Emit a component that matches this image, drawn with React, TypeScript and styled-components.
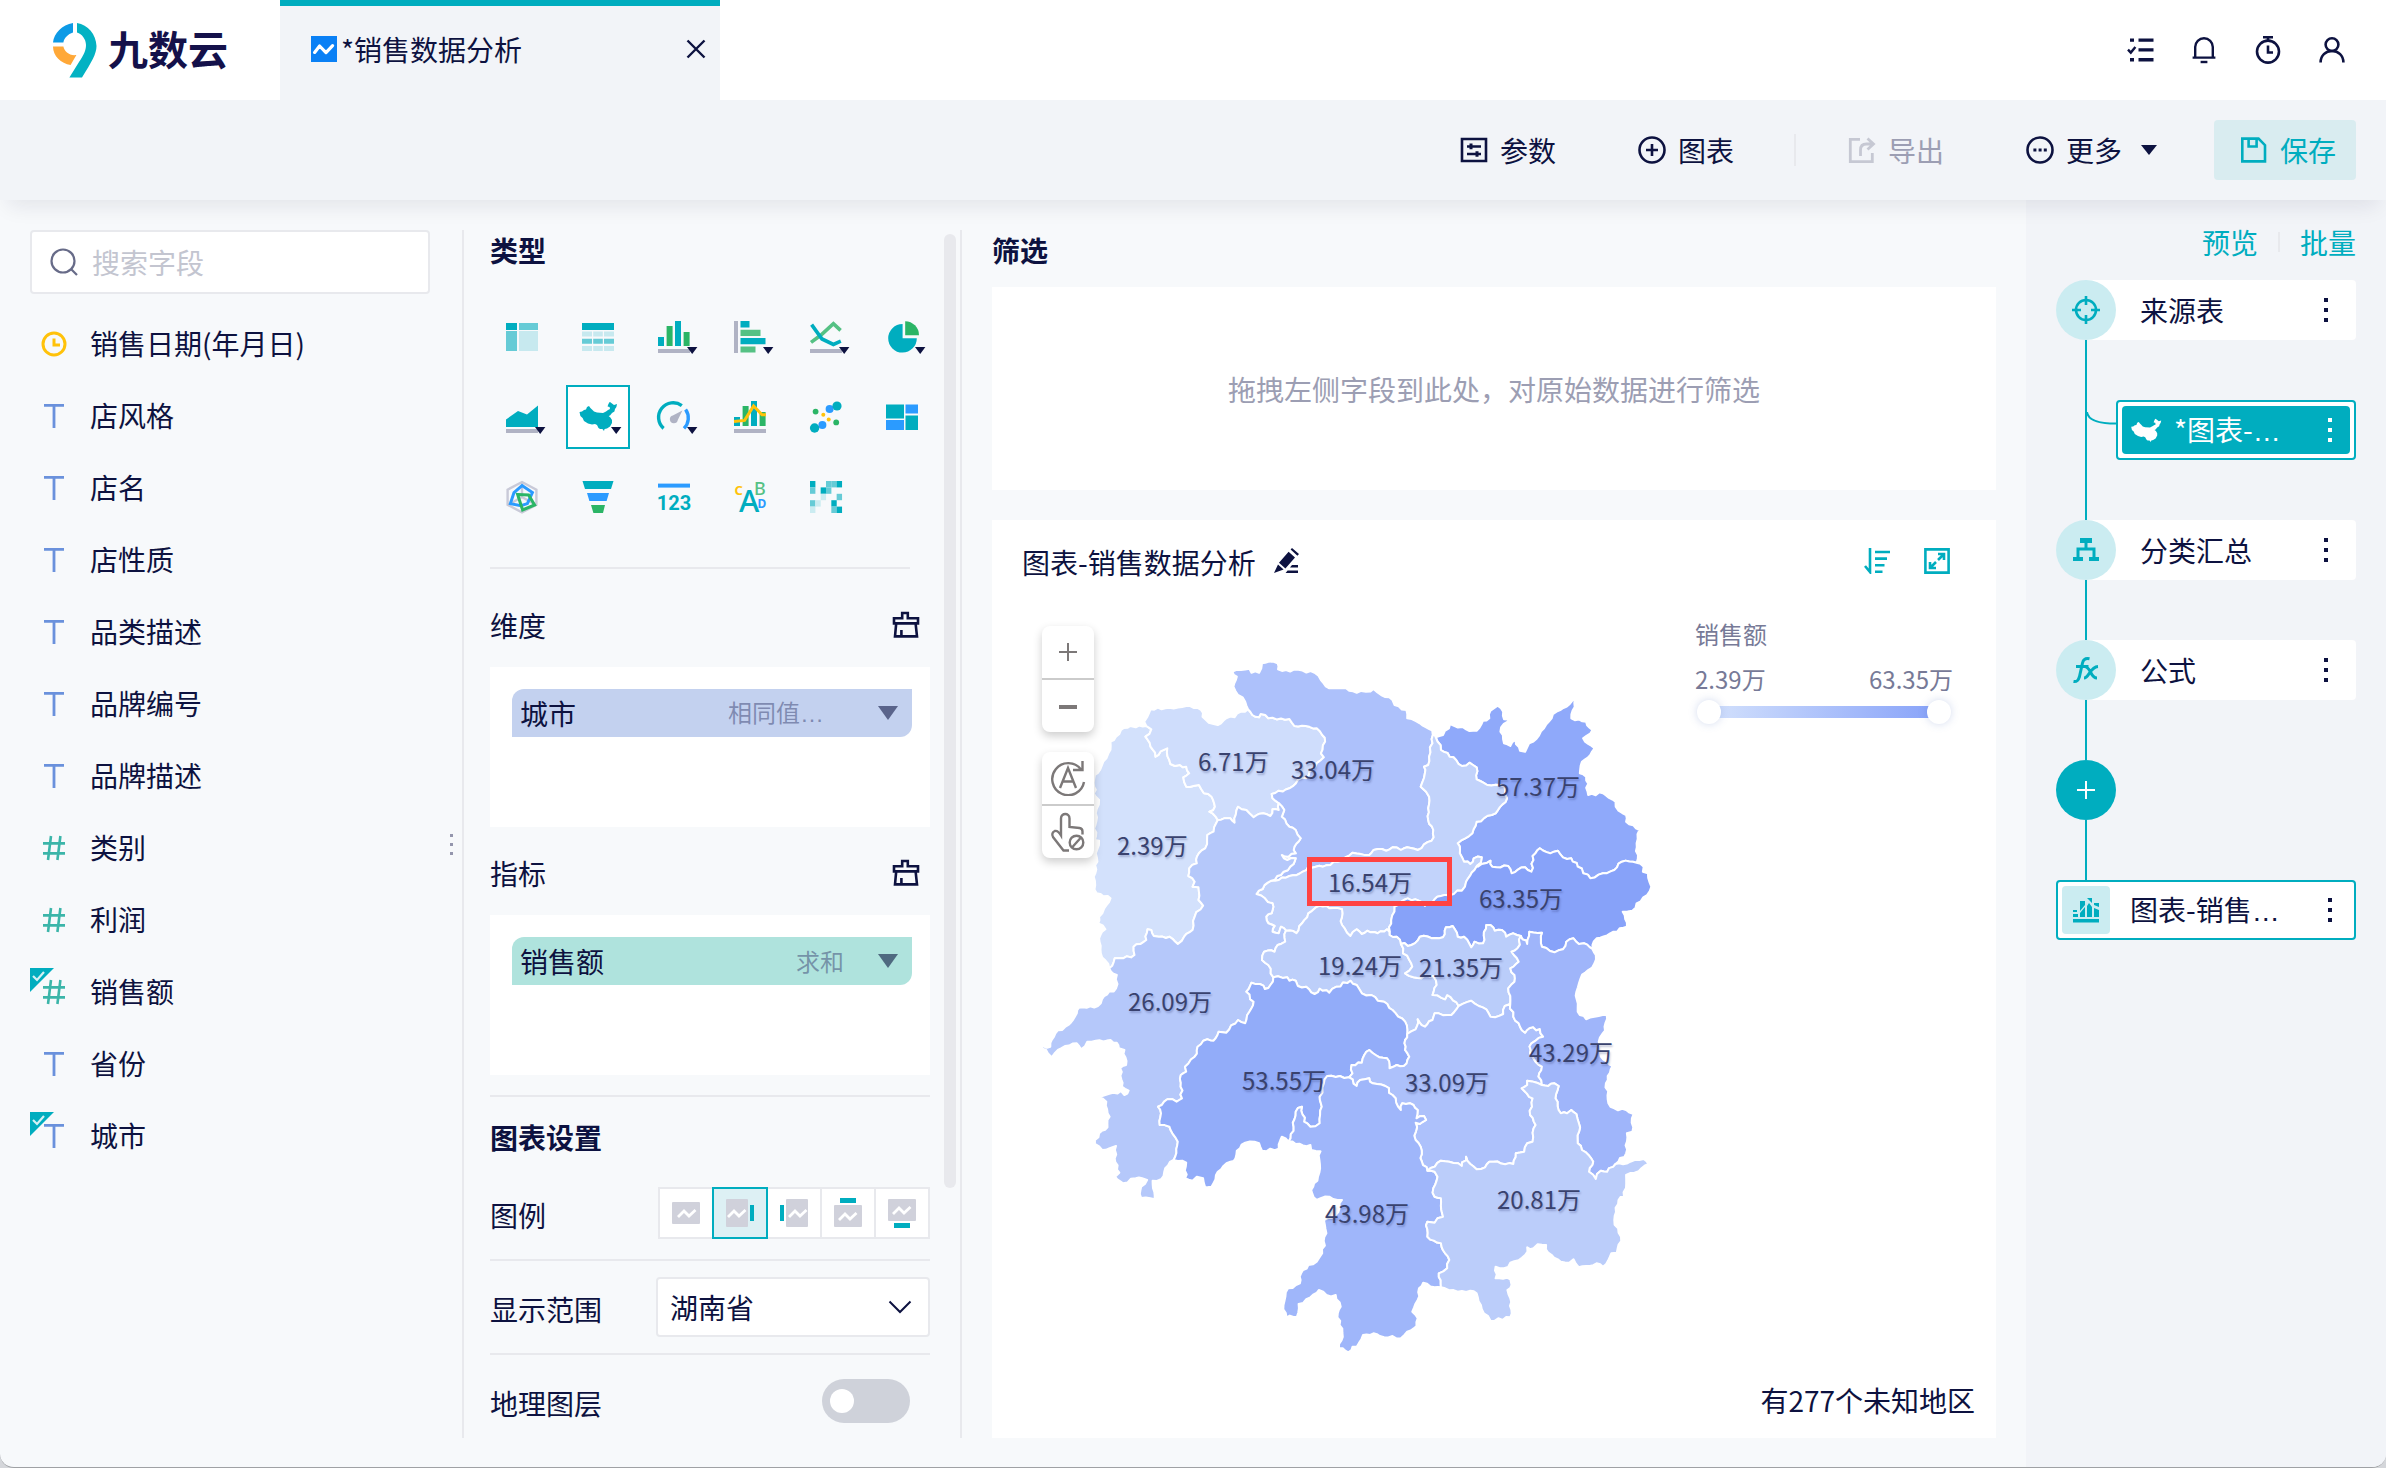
import React from 'react';
import styled, { createGlobalStyle, css } from 'styled-components';

const c = {
  ink: '#0d1240',
  teal: '#00adbf',
  tealMid: '#66cbd6',
  tealLight: '#cbecf1',
  green: '#2bb566',
  blue: '#2b9bff',
  yellow: '#ffc20a',
  line: '#e8e9ed',
  page: '#f7f9fb',
  side: '#f2f4f8',
  axis: '#b0b3c4',
  mute: '#9c9eb3',
};

const Global = createGlobalStyle`
  * { box-sizing: border-box; }
  html { background: #d4d6da; }
  body { margin: 0; }
  body, button, input, select {
    font-family: "Noto Sans CJK SC", "Noto Sans", sans-serif;
    font-size: 28px;
    line-height: 40px;
    color: ${c.ink};
  }
  button { border: 0; padding: 0; background: none; cursor: pointer; }
  svg { display: block; flex: none; }
  h1, h2, h3, ul, p { margin: 0; padding: 0; font-size: inherit; font-weight: inherit; }
`;

const Page = styled.div`
  min-height: 100vh;
  display: flex;
  flex-direction: column;
  background: ${c.page};
  border-bottom: 1px solid #9fa1a4;
  border-radius: 0 0 14px 14px;
  overflow: hidden;
`;

/* ---------- header ---------- */
const Header = styled.header`
  display: flex;
  height: 100px;
  background: #fff;
`;
const Brand = styled.a`
  width: 280px;
  display: flex;
  align-items: center;
  gap: 10px;
  padding-left: 52px;
  color: #14114a;
  text-decoration: none;
  font-size: 40px;
  font-weight: 700;
  span { padding-bottom: 4px; }
`;
const Tab = styled.div`
  width: 440px;
  display: flex;
  align-items: center;
  gap: 4px;
  padding: 0 14px 8px 31px;
  background: ${c.side};
  border-top: 6px solid ${c.teal};
`;
const TabTitle = styled.h1`
  flex: 1;
`;
const HeaderTools = styled.nav`
  margin-left: auto;
  display: flex;
  align-items: center;
  gap: 36px;
  padding-right: 40px;
`;
const IconButton = styled.button`
  display: flex;
  align-items: center;
  justify-content: center;
`;

/* ---------- toolbar ---------- */
const Toolbar = styled.div`
  position: relative;
  z-index: 1;
  height: 100px;
  display: flex;
  align-items: center;
  justify-content: flex-end;
  padding-right: 30px;
  background: ${c.side};
  box-shadow: 0 14px 20px -8px rgba(20, 24, 50, 0.09);
`;
const ToolButton = styled.button<{ $muted?: boolean }>`
  display: flex;
  align-items: center;
  gap: 12px;
  margin-right: 82px;
  color: ${(p) => (p.$muted ? c.mute : c.ink)};
`;
const ToolGroup = styled.div<{ $end: number }>`
  display: flex;
  align-items: center;
  & > :last-child { margin-right: ${(p) => p.$end}px; }
`;
const ToolRule = styled.span`
  width: 2px;
  height: 32px;
  margin-right: 52px;
  background: ${c.line};
`;
const SaveButton = styled.button`
  display: flex;
  align-items: center;
  gap: 12px;
  height: 60px;
  padding: 0 20px 0 26px;
  border-radius: 4px;
  background: #d9ecf0;
  color: ${c.teal};
`;

/* ---------- body ---------- */
const Body = styled.main`
  flex: 1;
  display: flex;
`;
const FieldPanel = styled.aside`
  position: relative;
  width: 464px;
  margin: 30px 0 29px;
  padding: 0 32px 0 30px;
  border-right: 2px solid ${c.line};
`;
const Search = styled.label`
  display: flex;
  align-items: center;
  gap: 12px;
  height: 64px;
  padding: 0 16px;
  background: #fff;
  border: 2px solid ${c.line};
  border-radius: 4px;
  input {
    flex: 1;
    min-width: 0;
    border: 0;
    padding: 0;
    outline: 0;
    background: none;
  }
  input::placeholder { color: #c3c5d0; opacity: 1; }
`;
const FieldList = styled.ul`
  list-style: none;
  margin-top: 26px;
  display: grid;
  gap: 24px;
`;
const FieldRow = styled.li`
  position: relative;
  display: flex;
  align-items: center;
  gap: 22px;
  height: 48px;
  padding-left: 10px;
`;
const FieldName = styled.span`
  padding-bottom: 2px;
`;
const UsedBadge = styled.svg`
  position: absolute;
  left: 0;
  top: 0;
`;
const DragHandle = styled.span`
  position: absolute;
  right: 8px;
  top: 50%;
`;

const SetupPanel = styled.section`
  width: 498px;
  margin: 30px 0 29px;
  padding: 0 4px 0 26px;
  display: flex;
  gap: 14px;
  border-right: 2px solid ${c.line};
`;
const SetupContent = styled.div`
  flex: 1;
  min-width: 0;
`;
const ScrollThumb = styled.div`
  flex: none;
  width: 12px;
  height: 954px;
  margin-top: 4px;
  border-radius: 6px;
  background: ${c.line};
`;
const Title = styled.h2`
  font-weight: 700;
`;
const TypeGrid = styled.div`
  display: grid;
  grid-template-columns: repeat(6, 64px);
  gap: 16px 12px;
  margin: 35px 0 38px;
`;
const TypeButton = styled.button<{ $on?: boolean }>`
  width: 64px;
  height: 64px;
  ${(p) => p.$on && css`
    background: #fff;
    box-shadow: inset 0 0 0 2px ${c.teal};
  `}
`;
const Rule = styled.hr<{ $inset?: boolean; $above?: number }>`
  height: 2px;
  margin: ${(p) => p.$above ?? 0}px ${(p) => (p.$inset ? 20 : 0)}px 0 0;
  border: 0;
  background: ${c.line};
`;
const GroupHead = styled.div<{ $first?: boolean }>`
  display: flex;
  align-items: center;
  justify-content: space-between;
  padding: ${(p) => (p.$first ? 36 : 26)}px 10px 22px 0;
`;
const DropBox = styled.div`
  height: 160px;
  padding: 22px 18px 22px 22px;
  background: #fff;
`;
const Chip = styled.div<{ $tone: string }>`
  display: flex;
  align-items: center;
  height: 48px;
  padding: 0 14px 0 8px;
  background: ${(p) => p.$tone};
  border-radius: 12px 0 12px 0;
`;
const ChipAux = styled.span`
  margin-left: auto;
  font-size: 24px;
  color: rgba(60, 68, 115, 0.5);
`;
const ChipArrow = styled(IconButton)<{ $gap: number }>`
  margin-left: ${(p) => p.$gap}px;
`;
const SectionHead = styled.div`
  padding: 20px 0 30px;
`;
const SettingRow = styled.div<{ $top: number; $bottom: number }>`
  display: flex;
  align-items: center;
  justify-content: space-between;
  padding: ${(p) => p.$top}px 0 ${(p) => p.$bottom}px;
  & > span, & > label { padding-top: 4px; }
`;
const LegendPicker = styled.div`
  display: flex;
  padding-left: 2px;
`;
const LegendButton = styled.button<{ $on?: boolean }>`
  position: relative;
  width: 56px;
  height: 52px;
  margin-left: -2px;
  background: ${(p) => (p.$on ? '#ddf0f4' : '#fff')};
  border: 2px solid ${(p) => (p.$on ? c.teal : c.line)};
  z-index: ${(p) => (p.$on ? 1 : 0)};
  svg { margin: -2px; }
`;
const SelectWrap = styled.div`
  position: relative;
  width: 274px;
  select {
    appearance: none;
    width: 100%;
    height: 60px;
    padding: 0 48px 0 12px;
    background: #fff;
    border: 2px solid ${c.line};
    border-radius: 4px;
  }
  svg {
    position: absolute;
    right: 18px;
    top: 23px;
    pointer-events: none;
  }
`;
const Switch = styled.input`
  appearance: none;
  width: 88px;
  height: 44px;
  margin: 0 20px 0 0;
  padding: 10px 8px;
  border-radius: 22px;
  background: #cfd2da;
  &::before {
    content: '';
    display: block;
    width: 24px;
    height: 24px;
    border-radius: 50%;
    background: #fff;
  }
`;

const Stage = styled.section`
  flex: 1;
  min-width: 0;
  display: flex;
  flex-direction: column;
  padding: 30px 30px 29px;
`;
const FilterDrop = styled.div`
  height: 203px;
  margin: 17px 0 30px;
  display: flex;
  align-items: center;
  justify-content: center;
  background: #fff;
  color: ${c.mute};
`;
const ChartCard = styled.article`
  flex: 1;
  display: flex;
  flex-direction: column;
  background: #fff;
`;
const ChartHead = styled.div`
  display: flex;
  align-items: center;
  gap: 16px;
  padding: 20px 46px 20px 30px;
  h3 { padding-top: 2px; }
`;
const ChartTools = styled.div`
  margin-left: auto;
  display: flex;
  gap: 34px;
`;
const Canvas = styled.div`
  flex: 1;
  position: relative;
  padding: 24px 50px;
`;
const MapArt = styled.svg`
  position: absolute;
  left: 28px;
  top: 38px;
  overflow: visible;
  text {
    font-size: 24px;
    fill: #39426e;
    text-shadow: 1px 2px 2px rgba(50, 60, 120, 0.3);
  }
`;
const MapTools = styled.div`
  position: relative;
  width: 52px;
  margin-bottom: 20px;
  border-radius: 8px;
  background: #fff;
  box-shadow: 0 4px 10px rgba(0, 0, 0, 0.2);
  button { width: 52px; height: 52px; }
  button + button { height: 54px; border-top: 2px solid #cbcbcb; }
`;
const ScaleLegend = styled.div`
  position: absolute;
  right: 43px;
  top: 12px;
  width: 258px;
  font-size: 24px;
  color: #777a97;
`;
const ScaleEnds = styled.div`
  display: flex;
  justify-content: space-between;
  margin-top: 5px;
`;
const ScaleTrack = styled.div`
  position: relative;
  height: 12px;
  margin: 7px 14px;
  background: linear-gradient(90deg, #d3e1fc, #87a2f9);
  input {
    appearance: none;
    position: absolute;
    left: -12px;
    top: -6px;
    width: calc(100% + 24px);
    height: 24px;
    margin: 0;
    background: none;
    pointer-events: none;
  }
  input::-webkit-slider-thumb {
    appearance: none;
    pointer-events: auto;
    width: 24px;
    height: 24px;
    border-radius: 50%;
    background: #fff;
    box-shadow: 0 0 8px rgba(80, 110, 190, 0.25);
  }
`;
const UnknownNote = styled.p`
  position: absolute;
  right: 21px;
  bottom: 18px;
`;

const FlowPanel = styled.aside`
  width: 360px;
  padding: 22px 30px;
  background: ${c.side};
`;
const FlowLinks = styled.div`
  display: flex;
  justify-content: flex-end;
  align-items: center;
  gap: 20px;
  margin-bottom: 18px;
  button { color: ${c.teal}; }
  span { width: 2px; height: 20px; background: ${c.line}; }
`;
const Node = styled.div`
  display: flex;
  align-items: center;
  height: 60px;
  padding-right: 26px;
  background: linear-gradient(90deg, transparent 30px, #fff 30px);
  border-radius: 4px;
`;
const NodeIcon = styled.span`
  width: 60px;
  height: 60px;
  margin-right: 24px;
  display: flex;
  align-items: center;
  justify-content: center;
  border-radius: 50%;
  background: ${c.tealLight};
`;
const NodeName = styled.span`
  flex: 1;
  white-space: nowrap;
`;
const Wire = styled.div`
  width: 2px;
  height: 60px;
  margin-left: 29px;
  background: ${c.teal};
`;
const Branch = styled.div`
  display: flex;
  align-items: center;
  height: 180px;
  margin-left: 29px;
  border-left: 2px solid ${c.teal};
`;
const ChartNode = styled.div`
  flex: 1;
  display: flex;
  align-items: center;
  height: 60px;
  padding: 4px;
  background: #fff;
  border: 2px solid ${c.teal};
  border-radius: 4px;
`;
const ChartNodeFill = styled.div`
  flex: 1;
  display: flex;
  align-items: center;
  gap: 12px;
  height: 48px;
  padding: 0 16px 0 8px;
  border-radius: 4px;
  background: ${c.teal};
  color: #fff;
`;
const ChartNodeIcon = styled.span`
  width: 48px;
  height: 48px;
  margin-right: 20px;
  display: flex;
  align-items: center;
  justify-content: center;
  border-radius: 4px;
  background: ${c.tealLight};
`;
const OutputNode = styled(ChartNode)`
  padding-right: 20px;
`;
const AddButton = styled.button`
  width: 60px;
  height: 60px;
  display: flex;
  align-items: center;
  justify-content: center;
  border-radius: 50%;
  background: ${c.teal};
`;
const Dots = styled.span`
  font-family: "Liberation Sans", sans-serif;
`;

/* ---------- small icons ---------- */
const Kebab = ({ color = c.ink }: { color?: string }) => (
  <IconButton aria-label="菜单">
    <svg width="8" height="24" viewBox="0 0 8 24" fill={color}>
      <path d="M2 0h4v4H2zM2 10h4v4H2zM2 20h4v4H2z" />
    </svg>
  </IconButton>
);
const Brush = () => (
  <svg width="28" height="28" viewBox="0 0 28 28" fill="none" stroke={c.ink} strokeWidth="2.6">
    <path d="M2 7.2h8.2V2h5.600v5.200H26v5.200H2zM4.200 12.400 3 25.400h22l-1.400-13M9.400 25v-6" />
  </svg>
);
const CHINA = '13.5,27 16,26.6 18,25 20,24.6 21,22 23,21 24.4,23 26,24.5 28,26.6 31,27.6 37,28 40,26.4 42,25 44,24 43.6,22 41.6,21.6 42,20 43.2,17.6 44,17 46,18.4 48,20 51,19 50.4,22 49,24 48.4,26.4 46,28 44,30.4 42.6,31 44.4,32.4 46,35 46,38 44,41.6 41,43.6 38.6,44 38,46 36.4,44 34,44 32.5,43 31,40 29,39 26,39.6 22,38.5 18,36 16.6,33 14.4,31';
const China = ({ fill }: { fill: string }) => (
  <svg width="32" height="26" viewBox="12 15 40 32"><polygon points={CHINA} fill={fill} /></svg>
);

type Cell = { name: string; menu?: boolean; on?: boolean; art: React.ReactNode };
const Base = () => <rect x="16" y="44" width="32" height="4" fill={c.axis} />;
const Bars = () => (
  <>
    <path d="M16 32h6v9h-6zM33 16h6v25h-6z" fill={c.teal} />
    <path d="M24.6 21h6v20h-6zM41.6 27h6v14h-6z" fill={c.green} />
  </>
);
const heat: [number, number, string][] = [
  [0, 0, c.teal], [3, 0, c.tealMid], [4, 0, c.tealMid], [5, 0, c.teal],
  [0, 1, c.tealMid], [2, 1, c.teal], [3, 1, c.tealMid],
  [2, 2, c.tealLight], [5, 2, c.tealMid],
  [0, 3, c.tealMid], [1, 3, c.tealLight], [4, 3, c.teal],
  [0, 4, c.tealLight], [4, 4, c.tealMid], [5, 4, c.teal],
];
const types: Cell[] = [
  { name: '交叉表', art: <><path d="M16 18h11v7H16z" fill={c.teal} /><path d="M29 18h19v7H29zM16 26h11v20H16z" fill={c.tealMid} /><path d="M29 26h19v20H29z" fill="#c7e9ef" /></> },
  { name: '明细表', art: <><path d="M16 18h32v7H16z" fill={c.teal} /><path d="M16 26.6h10v5H16zM27.2 26.6h9.6v5h-9.6zM38 26.6h10v5H38zM16 41h10v5H16zM27.2 41h9.6v5h-9.6zM38 41h10v5H38z" fill="#c7e9ef" /><path d="M16 33.8h10v5H16zM27.2 33.8h9.6v5h-9.6zM38 33.8h10v5H38z" fill={c.tealMid} /></> },
  { name: '柱形图', menu: true, art: <><Bars /><Base /></> },
  { name: '条形图', menu: true, art: <><path d="M16 16h4v32h-4z" fill={c.axis} /><path d="M22.5 16h9v6.4h-9zM22.5 33h25v6.2h-25z" fill={c.teal} /><path d="M22.5 24.8h20V31h-20zM22.5 41.6h15v6h-15z" fill="#55c184" /></> },
  { name: '折线图', menu: true, art: <><g fill="none" strokeWidth="3.6"><path d="M17 37.4 27 30l12.4-11.4L46.6 25.4" stroke="#55c184" /><path d="M17.6 19.6 28 34l11.4 5.4 7.4-3.2" stroke={c.teal} /></g><Base /></> },
  { name: '饼图', menu: true, art: <><path d="M32.6 19v14.2h14.2A14.3 14.3 0 1 1 32.6 19z" fill={c.teal} /><path d="M35.2 16.2A14 14 0 0 1 49 30.2H35.2z" fill={c.green} /></> },
  { name: '面积图', menu: true, art: <><path d="M16 34.5 28 26l9 3.6 11-9.2V42H16z" fill={c.teal} /><Base /></> },
  { name: '地图', menu: true, on: true, art: <polygon points={CHINA} fill={c.teal} /> },
  { name: '仪表盘', menu: true, art: <><g fill="none" strokeWidth="3.4"><path d="M21.6 43.4A14.6 14.6 0 0 1 39.8 20.6" stroke={c.teal} /><path d="M43.6 24.6a14.6 14.6 0 0 1-1.6 18.8" stroke={c.blue} /></g><path d="M40.4 25.4 35.8 35a4 4 0 1 1-5-4.6z" fill={c.axis} /></> },
  { name: '组合图', art: <><Bars /><path d="M16 36.4 26.6 35.4 35.6 21 44 29.8H48" fill="none" stroke={c.yellow} strokeWidth="3" /><Base /></> },
  { name: '散点图', art: <><g fill={c.blue}><circle cx="35.6" cy="24" r="4" /><circle cx="28.4" cy="40" r="4" /></g><g fill={c.teal}><circle cx="43" cy="21" r="4.6" /><circle cx="20.6" cy="43" r="4.7" /></g><g fill={c.green}><circle cx="21.6" cy="26.6" r="2.9" /><circle cx="42.2" cy="37.4" r="2.9" /></g><g fill={c.yellow}><circle cx="29.3" cy="29.8" r="2" /><circle cx="34.7" cy="34.4" r="2" /></g></> },
  { name: '矩形树图', art: <><path d="M16 19.5h18v14H16zM35.5 30.5H48V45H35.5z" fill={c.teal} /><path d="M35.5 19.5H48v9H35.5zM16 35h18v10H16z" fill={c.blue} /></> },
  { name: '雷达图', art: <g fill="none" strokeWidth="3"><path d="m32 17 14.4 7.6v15.2L32 47.4l-14.4-7.6V24.6zM32 17v15l14 8M32 32l-14 8" stroke="#c9cad8" strokeWidth="2.4" /><path d="m32 20.6 10.4 7L37.4 38.6 31 40.6l-10.6-2 3.6-11z" stroke={c.blue} /><path d="M27.6 29.4 38.6 30l6 10-12 5z" stroke={c.green} /></g> },
  { name: '漏斗图', art: <><path d="M16.5 16h31L45 24H19z" fill={c.teal} /><path d="M21 28h22l-2.4 8H23.4z" fill={c.blue} /><path d="M25 40h14l-2 8H27.4z" fill={c.green} /></> },
  { name: '指标卡', art: <><path d="M16 18.6h32v4H16z" fill={c.blue} /><text x="32" y="44.6" textAnchor="middle" fontFamily="Roboto" fontWeight="700" fontSize="20" fill={c.teal}>123</text></> },
  { name: '词云', art: <g fontFamily="Noto Sans"><text x="21" y="47" fontSize="31" fontWeight="500" fill={c.teal}>A</text><text x="16.6" y="30" fontSize="13" fontWeight="700" fill={c.yellow}>C</text><text x="36" y="30" fontSize="18" fontWeight="500" fill="#55c184">B</text><text x="39.4" y="43" fontSize="12" fontWeight="700" fill={c.blue}>D</text></g> },
  { name: '热力图', art: <>{heat.map(([x, y, f]) => <rect key={`${x}-${y}`} x={16 + x * 5.33} y={16 + y * 6.4} width="5.4" height="6.4" fill={f} />)}</> },
];

/* ---------- map ---------- */
type Pt = [number, number];
const GRID_X = 2.376;
const GRID_Y = 3;

const hash = (n: number) => {
  const s = Math.sin(n * 12.9898) * 43758.5453;
  return s - Math.floor(s) - 0.5;
};

/* Reads one boundary line and roughens it, so both neighbours share the same coast. */
const arc = (text: string, south = 0): Pt[] => {
  const pts = text.trim().split(/\s+/).map((p) => {
    const [x, y] = p.split(',').map(Number);
    return [x / GRID_X, (y + south) / GRID_Y] as Pt;
  });
  const out: Pt[] = [pts[0]];
  for (let i = 1; i < pts.length; i++) {
    const [a, b] = [pts[i - 1], pts[i]];
    const len = Math.hypot(b[0] - a[0], b[1] - a[1]);
    const n = Math.max(1, Math.round(len / 4));
    for (let k = 1; k < n; k++) {
      const t = k / n;
      const d = hash(a[0] * 3 + a[1] * 7 + k * 5) * 3;
      out.push([
        a[0] + (b[0] - a[0]) * t - ((b[1] - a[1]) / len) * d,
        a[1] + (b[1] - a[1]) * t + ((b[0] - a[0]) / len) * d,
      ]);
    }
    out.push(b);
  }
  return out;
};

const S = 960;
const arcs: Record<string, Pt[]> = {
  aCoast: arc('300,258 275,262 262,258 240,270 228,290 215,305 210,340 198,365 190,390 178,405 176,440 180,470 188,480 180,520 178,600 188,602 180,640 184,665 175,710 182,760 215,775 200,805 188,830 186,850 203,868 188,895 192,940 212,985'),
  ab: arc('300,258 312,268 298,290 322,350 350,325 357,372 380,375 395,380 402,400 388,412 395,440 412,438 425,435 437,460 455,470 463,500 450,515 470,540'),
  bCoast: arc('300,258 295,245 302,232 310,208 345,205 395,198 430,210 440,238 460,252 470,255 490,235 510,232 525,215 542,208'),
  bc: arc('542,208 552,225 568,232 572,222 590,235 640,237 652,258 705,265 718,285 725,305 715,340 722,352 705,370 680,415 660,420 640,445 598,462 600,475 615,490'),
  bg: arc('470,540 485,535 500,535 510,548 518,500 545,520 555,532 578,520 595,528 600,508 615,510 615,490'),
  ag: arc('470,540 460,575 445,585 440,625 425,640 420,670 402,685 400,708 415,725 410,740 424,742 424,780 435,797 415,830 410,870 390,890 375,912 355,890 330,890 318,888 312,870 303,868 300,900 270,920 272,945 245,955 225,955 212,985'),
  cCoast: arc('542,208 535,185 518,165 507,140 515,110 505,95 525,90 545,86 550,98 568,98 575,70 590,65 612,70 613,88 700,98 715,120 735,145 765,145 800,158 822,155 840,147 858,165 885,180 890,195 918,210 920,235 950,250 965,262 980,272'),
  cg: arc('615,490 628,510 622,530 640,560 655,570 667,595 652,620 655,640 638,650 622,645 635,660 655,655 650,672 620,705 597,722'),
  ce: arc('597,722 640,708 672,695 685,680 720,680 755,665 790,638 830,645 840,630 870,632 885,622 905,630 920,622 945,630 978,602 982,570 970,540 972,470 965,455 952,440 962,400 960,380 970,375 972,350 980,310 980,272'),
  dCoast: arc('988,292 1005,285 1022,252 1060,268 1085,272 1100,242 1115,235 1118,212 1135,197 1148,215 1150,238 1164,232 1172,205 1166,236 1143,262 1150,310 1165,318 1178,300 1188,332 1200,335 1205,322 1245,265 1275,215 1320,177 1310,235 1345,245 1360,270 1338,295 1365,325 1355,345 1335,365 1330,400 1345,410 1350,465 1385,460 1415,485 1422,512 1440,525 1440,545 1472,570 1465,610 1465,668'),
  ed: arc('988,292 1000,330 1030,352 1050,378 1068,368 1085,382 1085,418 1110,435 1150,437 1157,475 1130,520 1085,545 1075,580 1058,595 1040,610 1045,640 1055,665 1070,672 1078,655 1097,652 1095,668'),
  df: arc('1095,668 1088,680 1118,662 1122,680 1160,678 1168,700 1200,682 1215,695 1218,648 1235,625 1260,640 1278,632 1290,652 1310,655 1325,680 1355,715 1385,700 1412,690 1430,665 1465,668'),
  ef: arc('1095,668 1080,690 1060,725 1050,752 1000,768 985,778 962,798 940,778 912,780 890,800 882,840 878,885'),
  eh: arc('878,885 872,868 850,880 825,872 812,882 800,868 785,888 765,855 765,808 735,805 712,797 685,820 670,850 657,880 632,872'),
  ge: arc('597,722 562,762 582,775 600,790 598,820 585,830 590,850 605,858 600,875 615,880 620,860 632,872'),
  gh: arc('632,872 630,905 612,915 605,935 580,935 575,960 590,975 602,1012'),
  fCoast: arc('1465,668 1482,680 1480,695 1492,700 1500,740 1490,765 1465,790 1455,812 1432,815 1442,860 1410,875 1370,895 1360,927'),
  fh: arc('878,885 895,890 905,912'),
  fi: arc('905,912 930,915 950,890 1005,892 1012,862 1028,858 1040,890 1055,890 1072,922 1080,905 1100,910 1108,855 1118,855 1128,872 1145,870 1155,890 1172,880 1190,888'),
  fl: arc('1190,888 1205,912 1210,875 1240,878 1240,920 1270,937 1290,928 1298,905 1315,895 1328,912 1340,910 1360,927'),
  hi: arc('905,912 910,940 925,960 932,980 915,1000 935,1012 982,1008 990,1035 980,1065 1010,1078 1015,1065 1042,1098'),
  hk: arc('1042,1098 1025,1125 985,1120 980,1140 962,1160 945,1138 940,1168 920,1182'),
  hj: arc('602,1012 635,1012 640,1022 655,1022 660,1038 680,1040 700,1062 712,1046 735,1058 752,1040 785,1022 805,1045 812,1060 835,1065 850,1082 865,1085 885,1110 915,1145 920,1182'),
  ik: arc('1042,1098 1072,1082 1090,1098 1108,1108 1118,1130 1148,1122 1152,1098 1165,1092'),
  il: arc('1190,888 1182,925 1168,935 1185,965 1165,985 1175,1005 1175,1025 1160,1045 1165,1092'),
  kl: arc('1165,132 1172,170 1185,190 1200,218 1210,205 1235,207 1243,230 1215,250 1212,280 1225,305 1240,320 1232,350 1240,375', S),
  kn: arc('1240,375 1228,368 1205,362 1205,375 1192,385 1218,415 1212,465 1225,495 1218,518 1218,545 1205,550 1198,575 1178,580 1172,612 1115,605 1105,622 1085,628 1070,612 1060,590 1050,618 1020,605 1000,602 968,632', S),
  ln: arc('1240,375 1255,378 1270,370 1280,378 1272,415 1285,460 1300,460 1310,450 1322,462 1328,490 1325,550 1335,570 1362,605 1352,635 1368,657 1380,632 1395,635 1415,612', S),
  jk: arc('920,222 915,240 915,270 925,290 912,318 895,315 878,325 872,295 845,285 830,270 818,285 812,308 788,315 790,340 782,352', S),
  jm: arc('782,352 760,348 730,348 722,370 712,410 717,440 712,490 690,500 675,485 670,440 655,455 650,500 638,545', S),
  km: arc('782,352 800,378 808,360 830,355 838,370 868,378 885,405 905,450 908,430 935,435 945,450 942,475 960,468 965,480 950,492 940,488 940,540 952,560 955,605 968,632', S),
  mn: arc('968,632 985,635 992,650 982,685 985,710 1000,715 1005,770 992,775 985,788 968,785 968,830 1000,850 1010,880 1020,900 1015,925 995,940 1000,982', S),
  gj: arc('602,52 595,75 582,87 570,72 550,68 538,95 555,125 545,155 535,190 518,180 490,218 472,215 460,242 445,238 422,260 415,290 392,320 395,335 382,345 385,415 372,425 350,418 328,440 335,460 332,495 355,500 362,520 375,545 365,600', S),
  lCoast: arc('1360,-33 1368,-15 1365,10 1350,30 1332,55 1322,95 1325,155 1345,178 1375,168 1394,165 1390,212 1375,245 1380,290 1408,318 1392,370 1398,430 1412,445 1440,450 1458,462 1455,515 1442,520 1440,580 1415,612', S),
  nCoast: arc('1415,612 1450,605 1482,597 1493,612 1470,634 1440,645 1435,710 1422,720 1412,780 1428,830 1418,878 1405,880 1385,920 1370,910 1328,922 1315,898 1305,908 1285,905 1255,878 1250,855 1230,853 1220,865 1205,862 1200,885 1150,925 1130,920 1130,955 1165,958 1168,975 1158,990 1165,1015 1165,1072 1118,1082 1102,1060 1095,1035 1085,1000 1070,992 1040,995 1010,985 1000,982', S),
  mCoast: arc('1000,982 985,982 958,968 948,985 945,1020 932,1055 945,1075 942,1098 920,1115 905,1135 885,1128 855,1128 840,1120 815,1125 800,1160 790,1160 780,1177 758,1164 766,1118 755,1060 762,1040 750,1005 728,1005 710,990 690,1012 662,1032 658,1070 633,1072 626,1035 637,985 665,970 668,940 685,915 705,905 718,880 728,820 722,780 750,765 765,720 735,710 705,720 692,690 708,650 714,574 692,570 690,555 655,552 638,545', S),
  jCoast: arc('638,545 622,530 615,566 575,572 568,550 535,548 515,572 512,595 500,605 470,635 455,680 440,682 435,655 420,650 410,662 392,655 395,608 365,600', S),
  gCoast: arc('365,600 345,625 335,658 315,662 320,718 288,714 288,680 302,660 290,655 275,655 245,670 226,650 236,638 225,595 228,558 195,570 178,552 188,520 208,502 208,480 213,470 205,425 185,413 240,393 248,405 258,392 242,380 238,325 252,315 248,270 235,265 230,248 215,240 180,242 160,245 145,268 135,250 90,270 75,292 66,280 62,270 48,265 72,260 84,220 115,195 135,160 140,143 185,138 200,108 228,85 230,45 212,25', S),
};
const line = (...names: string[]) =>
  names
    .flatMap((n) => (n[0] === '-' ? [...arcs[n.slice(1)]].reverse() : arcs[n]))
    .map(([x, y]) => `${x.toFixed(1)},${y.toFixed(1)}`)
    .join(' ');

const regions: { fill: string; label: string; x: number; y: number; shape: string }[] = [
  { fill: '#d3e1fc', label: '2.39万', x: 97, y: 215, shape: line('aCoast', '-ag', '-ab') },
  { fill: '#cfddfc', label: '6.71万', x: 178, y: 131, shape: line('bCoast', 'bc', '-bg', '-ab') },
  { fill: '#adc1fb', label: '33.04万', x: 271, y: 139, shape: line('cCoast', '-ce', '-cg', '-bc') },
  { fill: '#8fa9fa', label: '57.37万', x: 476, y: 156, shape: line('dCoast', '-df', '-ed') },
  { fill: '#c2d3fb', label: '16.54万', x: 308, y: 252, shape: line('ce', 'ed', 'ef', 'eh', '-ge') },
  { fill: '#87a2f9', label: '63.35万', x: 459, y: 268, shape: line('df', 'fCoast', '-fl', '-fi', '-fh', '-ef') },
  { fill: '#b5c8fa', label: '26.09万', x: 108, y: 371, shape: line('bg', 'cg', 'ge', 'gh', 'gj', 'gCoast', '-ag') },
  { fill: '#bdcffa', label: '19.24万', x: 298, y: 335, shape: line('-eh', 'fh', 'hi', 'hk', '-hj', '-gh') },
  { fill: '#bacdfa', label: '21.35万', x: 399, y: 337, shape: line('fi', 'il', '-ik', '-hi') },
  { fill: '#92acf9', label: '53.55万', x: 222, y: 450, shape: line('hj', 'jk', 'jm', 'jCoast', '-gj') },
  { fill: '#adc1fb', label: '33.09万', x: 385, y: 452, shape: line('ik', 'kl', 'kn', '-km', '-jk', '-hk') },
  { fill: '#9fb5fa', label: '43.29万', x: 509, y: 422, shape: line('fl', 'lCoast', '-ln', '-kl', '-il') },
  { fill: '#9fb6fa', label: '43.98万', x: 305, y: 583, shape: line('km', 'mn', 'mCoast', '-jm') },
  { fill: '#bbcdfa', label: '20.81万', x: 477, y: 569, shape: line('ln', 'nCoast', '-mn', '-kn') },
];

/* ---------- data ---------- */
const fields: { kind: 'date' | 'text' | 'num'; name: string; used?: boolean }[] = [
  { kind: 'date', name: '销售日期(年月日)' },
  { kind: 'text', name: '店风格' },
  { kind: 'text', name: '店名' },
  { kind: 'text', name: '店性质' },
  { kind: 'text', name: '品类描述' },
  { kind: 'text', name: '品牌编号' },
  { kind: 'text', name: '品牌描述' },
  { kind: 'num', name: '类别' },
  { kind: 'num', name: '利润' },
  { kind: 'num', name: '销售额', used: true },
  { kind: 'text', name: '省份' },
  { kind: 'text', name: '城市', used: true },
];
const fieldIcon = {
  date: <g fill="none" stroke={c.yellow} strokeWidth="3"><circle cx="14" cy="14" r="11" /><path d="M14 8.6V15h6" /></g>,
  text: <path d="M4 3.4h20M14 3.4V26" fill="none" stroke="#6a91dc" strokeWidth="2.8" />,
  num: <path d="M3 9.4h22M3 19.4h22M11 2 8 26M20.4 2l-3 24" fill="none" stroke="#3bb5a9" strokeWidth="2.6" />,
};

const legendSpots = [
  { name: '无', box: [14, 15, 28, 22], bar: null, z: [20, 26] },
  { name: '右', box: [14, 12, 22, 28], bar: [38, 18, 4, 16], z: [16, 26] },
  { name: '左', box: [20, 12, 22, 28], bar: [14, 18, 4, 16], z: [23, 26] },
  { name: '上', box: [14, 18, 28, 22], bar: [20, 11, 16, 5], z: [19, 29] },
  { name: '下', box: [14, 12, 28, 22], bar: [20, 36, 16, 5], z: [19, 23] },
];

const App = () => (
  <>
    <Global />
    <Page>
      <Header>
        <Brand href="#">
          <svg width="46" height="56" viewBox="52 23 46 56">
            <path d="M77 24c11 2 19 11 19.500 23 0 8-5 16-14.500 31.500H69.400L79 63c5-7 7-12 7-17 0-6-4-11-9-12.600z" fill="#03b2c3" />
            <path d="M73 24C62 26 54 34 53 43.500h10.400C64 39 68 35 73 33.500z" fill="#0d9ae6" />
            <path d="M53 47.500h10.400c1 5 6 9.500 13 8.500l-5.800 10C61 64.500 53 57 53 47.500z" fill="#ffa838" />
          </svg>
          <span>九数云</span>
        </Brand>
        <Tab>
          <svg width="26" height="26" viewBox="0 0 26 26">
            <path d="M0 0h26v26H0z" fill="#0a80f5" />
            <path d="m3.600 16.400 5-6.400 6.400 6.600 6.600-7" fill="none" stroke="#fff" strokeWidth="3.200" strokeLinecap="round" strokeLinejoin="round" />
          </svg>
          <TabTitle>*销售数据分析</TabTitle>
          <IconButton aria-label="关闭">
            <svg width="20" height="20" viewBox="0 0 20 20" stroke={c.ink} strokeWidth="2.400"><path d="m1.500 1.500 17 17M18.500 1.500l-17 17" /></svg>
          </IconButton>
        </Tab>
        <HeaderTools>
          <IconButton aria-label="任务">
            <svg width="28" height="28" viewBox="0 0 28 28" fill={c.ink}>
              <path d="M12.500 2.400h15v3.400h-15zM12.500 12.200h15v3.400h-15zM12.500 22h15v3.400h-15zM4 2.400h4v3.400H4zM4 22h4v3.400H4z" />
              <path d="m2 13.600 2.800 3L9.400 11" fill="none" stroke={c.ink} strokeWidth="2.400" />
            </svg>
          </IconButton>
          <IconButton aria-label="通知">
            <svg width="28" height="28" viewBox="0 0 28 28" fill="none" stroke={c.ink} strokeWidth="2.400">
              <path d="M2.600 21.600h22.800M5.200 21.600V11a8.800 8.800 0 0 1 17.600 0v10.600" /><path d="M10.600 26h6.800" />
            </svg>
          </IconButton>
          <IconButton aria-label="计时">
            <svg width="28" height="30" viewBox="0 0 28 30" fill="none" stroke={c.ink} strokeWidth="2.600">
              <circle cx="14" cy="16.600" r="11" /><path d="M9 2.200h10M14 2v4M14 10.500v7h5" />
            </svg>
          </IconButton>
          <IconButton aria-label="用户">
            <svg width="28" height="28" viewBox="0 0 28 28" fill="none" stroke={c.ink} strokeWidth="2.600">
              <circle cx="14" cy="8.600" r="6.400" /><path d="M2.600 26.400c0-7 5-11.400 11.400-11.400s11.400 4.400 11.400 11.400" />
            </svg>
          </IconButton>
        </HeaderTools>
      </Header>

      <Toolbar>
        <ToolGroup $end={60}>
          <ToolButton>
            <svg width="28" height="28" viewBox="0 0 28 28" fill="none" stroke="currentColor" strokeWidth="2.600">
              <path d="M2 3h24v22H2zM7 10.500h14M7 18h14" /><path d="M11 7.600v5.600M17 15.200v5.600" strokeWidth="3" />
            </svg>
            参数
          </ToolButton>
          <ToolButton>
            <svg width="28" height="28" viewBox="0 0 28 28" fill="none" stroke="currentColor" strokeWidth="2.600">
              <circle cx="14" cy="14" r="12.500" /><path d="M14 8v12M8 14h12" />
            </svg>
            图表
          </ToolButton>
        </ToolGroup>
        <ToolRule />
        <ToolButton $muted>
          <svg width="28" height="28" viewBox="0 0 28 28" fill="none" stroke="#c6c8d3" strokeWidth="2.800">
            <path d="M12 3.300H2.300v22.400h22V17" /><path d="M12.500 20v-6c0-4 2-6 6-6h6M19.500 2.500 25.500 8l-6 5.500" />
          </svg>
          导出
        </ToolButton>
        <ToolGroup $end={56}>
          <ToolButton>
            <svg width="28" height="28" viewBox="0 0 28 28" fill="none" stroke="currentColor" strokeWidth="2.600">
              <circle cx="14" cy="14" r="12.500" /><path d="M7.400 14h3M12.600 14h3M17.800 14h3" strokeWidth="3" />
            </svg>
            更多
            <svg width="24" height="12" viewBox="0 0 24 12"><path d="M7 1h16l-8 10z" fill="currentColor" /></svg>
          </ToolButton>
        </ToolGroup>
        <SaveButton>
          <svg width="28" height="28" viewBox="0 0 28 28" fill="none" stroke="currentColor" strokeWidth="2.600">
            <path d="M2.300 2.600h16.200l6.500 6.600v16.200H2.300zM8.600 3v7.500h8V3" />
          </svg>
          保存
        </SaveButton>
      </Toolbar>

      <Body>
        <FieldPanel>
          <Search>
            <svg width="32" height="32" viewBox="0 0 32 32" fill="none" stroke="#676b88" strokeWidth="2.200">
              <circle cx="15" cy="15" r="11.500" /><path d="m23 23 6 6" />
            </svg>
            <input aria-label="搜索字段" placeholder="搜索字段" />
          </Search>
          <FieldList>
            {fields.map((f) => (
              <FieldRow key={f.name}>
                {f.used && (
                  <UsedBadge width="24" height="24" viewBox="0 0 24 24">
                    <path d="M0 0h24L0 24z" fill={c.teal} />
                    <path d="m3 8 4 4 7-8" fill="none" stroke="#d4f1f4" strokeWidth="2.200" />
                  </UsedBadge>
                )}
                <svg width="28" height="28" viewBox="0 0 28 28">{fieldIcon[f.kind]}</svg>
                <FieldName>{f.name}</FieldName>
              </FieldRow>
            ))}
          </FieldList>
          <DragHandle>
            <svg width="4" height="22" viewBox="0 0 4 22" fill="#9496ad"><path d="M0 0h3v3H0zM0 9h3v3H0zM0 18h3v3H0z" /></svg>
          </DragHandle>
        </FieldPanel>

        <SetupPanel>
          <SetupContent>
            <Title>类型</Title>
            <TypeGrid>
              {types.map((t) => (
                <TypeButton key={t.name} $on={t.on} aria-label={t.name} aria-pressed={!!t.on}>
                  <svg width="64" height="64" viewBox="0 0 64 64">
                    {t.art}
                    {t.menu && <path d="M45 42h10.400l-5.200 7z" fill={c.ink} />}
                  </svg>
                </TypeButton>
              ))}
            </TypeGrid>
            <Rule $inset />
            <GroupHead $first>
              <h3>维度</h3>
              <IconButton aria-label="清空维度"><Brush /></IconButton>
            </GroupHead>
            <DropBox>
              <Chip $tone="#c3d1ef">
                城市
                <ChipAux>相同值<Dots>…</Dots></ChipAux>
                <ChipArrow $gap={54} aria-label="维度选项">
                  <svg width="20" height="14" viewBox="0 0 20 14"><path d="M0 0h20L10 14z" fill="#5a648b" /></svg>
                </ChipArrow>
              </Chip>
            </DropBox>
            <GroupHead>
              <h3>指标</h3>
              <IconButton aria-label="清空指标"><Brush /></IconButton>
            </GroupHead>
            <DropBox>
              <Chip $tone="#afe3dd">
                销售额
                <ChipAux>求和</ChipAux>
                <ChipArrow $gap={34} aria-label="指标选项">
                  <svg width="20" height="14" viewBox="0 0 20 14"><path d="M0 0h20L10 14z" fill="#4f6a80" /></svg>
                </ChipArrow>
              </Chip>
            </DropBox>
            <Rule $above={20} />
            <SectionHead><Title>图表设置</Title></SectionHead>
            <SettingRow $top={0} $bottom={20}>
              <span>图例</span>
              <LegendPicker role="group" aria-label="图例">
                {legendSpots.map((l) => {
                  const on = l.name === '右';
                  const [x, y, w, h] = l.box;
                  return (
                    <LegendButton key={l.name} $on={on} aria-label={l.name} aria-pressed={on}>
                      <svg width="56" height="52" viewBox="0 0 56 52">
                        <rect x={x} y={y} width={w} height={h} rx="1" fill="#d0d1db" />
                        <path d={`M${l.z[0]} ${l.z[1] + 4}l6-6 5 5 6.500-6`} fill="none" stroke="#fff" strokeWidth="2.800" />
                        {l.bar && <rect x={l.bar[0]} y={l.bar[1]} width={l.bar[2]} height={l.bar[3]} fill={c.teal} />}
                      </svg>
                    </LegendButton>
                  );
                })}
              </LegendPicker>
            </SettingRow>
            <Rule />
            <SettingRow $top={16} $bottom={16}>
              <label htmlFor="range">显示范围</label>
              <SelectWrap>
                <select id="range" defaultValue="湖南省"><option>湖南省</option></select>
                <svg width="24" height="14" viewBox="0 0 24 14" fill="none" stroke={c.ink} strokeWidth="2"><path d="m1.500 1.500 10.500 10.500L22.500 1.500" /></svg>
              </SelectWrap>
            </SettingRow>
            <Rule />
            <SettingRow $top={24} $bottom={0}>
              <label htmlFor="layer">地理图层</label>
              <Switch id="layer" type="checkbox" role="switch" />
            </SettingRow>
          </SetupContent>
          <ScrollThumb />
        </SetupPanel>

        <Stage>
          <Title>筛选</Title>
          <FilterDrop>拖拽左侧字段到此处，对原始数据进行筛选</FilterDrop>
          <ChartCard>
            <ChartHead>
              <h3>图表-销售数据分析</h3>
              <IconButton aria-label="重命名">
                <svg width="28" height="26" viewBox="0 0 28 26" fill={c.ink}>
                  <path d="m16.600 3.800 6.400 5.600-9.600 11-6.400-5.600zM18.600 1.600 20 0l7 6-1.600 1.800zM6 16.400l5.600 5L2 25zM15.600 22.600H26V25H13.600z" />
                  <path d="M20 17h6v2.400h-8z" />
                </svg>
              </IconButton>
              <ChartTools>
                <IconButton aria-label="排序">
                  <svg width="26" height="26" viewBox="0 0 26 26" fill="none" stroke={c.teal} strokeWidth="2.600">
                    <path d="M6 0v24L1 18M11 4h15M11 10.600h12M11 17.200h9.500M11 23.800h7.500" />
                  </svg>
                </IconButton>
                <IconButton aria-label="放大">
                  <svg width="26" height="26" viewBox="0 0 26 26" fill="none" stroke={c.teal} strokeWidth="2.600">
                    <path d="M1.400 1.400h23.200v23.200H1.400zM14 6h6v6M20 6l-6 6M12 20H6v-6M6 20l6-6" />
                  </svg>
                </IconButton>
              </ChartTools>
            </ChartHead>
            <Canvas>
              <MapArt width="660" height="740" viewBox="0 0 660 740" role="img" aria-label="湖南省销售额地图">
                <g stroke="#fff" strokeWidth="2" strokeLinejoin="round">
                  {regions.map((r) => <polygon key={r.label} points={r.shape} fill={r.fill} />)}
                </g>
                {regions.map((r) => <text key={r.label} x={r.x} y={r.y}>{r.label}</text>)}
                <rect x="289.500" y="219.500" width="140" height="44" fill="none" stroke="#ff4343" strokeWidth="5" />
              </MapArt>
              <MapTools>
                <IconButton aria-label="放大地图">
                  <svg width="18" height="18" viewBox="0 0 18 18" stroke="#7c7878" strokeWidth="2"><path d="M9 0v18M0 9h18" /></svg>
                </IconButton>
                <IconButton aria-label="缩小地图">
                  <svg width="18" height="18" viewBox="0 0 18 18" stroke="#7c7878" strokeWidth="4"><path d="M0 10h18" /></svg>
                </IconButton>
              </MapTools>
              <MapTools>
                <IconButton aria-label="自动缩放">
                  <svg width="36" height="36" viewBox="0 0 36 36" fill="none" stroke="#7c7878" strokeWidth="2.400">
                    <path d="M34 22A16 16 0 1 1 31 9.500M32.500 1v9H23M10 28l8-20 8 20M13 21.500h10" />
                  </svg>
                </IconButton>
                <IconButton aria-label="禁止拖动">
                  <svg width="36" height="40" viewBox="0 0 36 40" fill="none" stroke="#7c7878" strokeWidth="2.400">
                    <path d="M19 38.500h-5.500L3 25c-1.500-2.500-.5-5 1.800-6 2-.6 4 .8 6.200 4.500V6.500c0-6 8.500-6 8.500 0V15l10 1c2 .2 3 1.400 3 3.500v3" />
                    <circle cx="26.500" cy="30.500" r="6.800" /><path d="m22 35.500 9-10" />
                  </svg>
                </IconButton>
              </MapTools>
              <ScaleLegend>
                销售额
                <ScaleEnds><span>2.39万</span><span>63.35万</span></ScaleEnds>
                <ScaleTrack>
                  <input type="range" aria-label="最小值" min="0" max="100" defaultValue="0" />
                  <input type="range" aria-label="最大值" min="0" max="100" defaultValue="100" />
                </ScaleTrack>
              </ScaleLegend>
              <UnknownNote>有277个未知地区</UnknownNote>
            </Canvas>
          </ChartCard>
        </Stage>

        <FlowPanel>
          <FlowLinks><button>预览</button><span /><button>批量</button></FlowLinks>
          <Node>
            <NodeIcon>
              <svg width="28" height="28" viewBox="0 0 28 28" fill="none" stroke={c.teal} strokeWidth="2.600">
                <circle cx="14" cy="14" r="10" /><path d="M14 0v9M14 19v9M0 14h9M19 14h9" />
              </svg>
            </NodeIcon>
            <NodeName>来源表</NodeName>
            <Kebab />
          </Node>
          <Branch>
            <svg width="29" height="60" viewBox="0 0 29 60" fill="none" stroke={c.teal} strokeWidth="2"><path d="M0 12c1 8 10 11.500 29 11.500" /></svg>
            <ChartNode>
              <ChartNodeFill>
                <China fill="#fff" />
                <NodeName>*图表-<Dots>…</Dots></NodeName>
                <Kebab color="#fff" />
              </ChartNodeFill>
            </ChartNode>
          </Branch>
          <Node>
            <NodeIcon>
              <svg width="26" height="24" viewBox="0 0 26 24" fill={c.teal}>
                <path d="M7 0h12v5h-4.500v4.500h8V19H26v4H16v-4h3.500v-6.500h-13V19H10v4H0v-4h3.500V9.500h8V5H7z" />
              </svg>
            </NodeIcon>
            <NodeName>分类汇总</NodeName>
            <Kebab />
          </Node>
          <Wire />
          <Node>
            <NodeIcon>
              <svg width="28" height="28" viewBox="0 0 28 28" fill="none" stroke={c.teal} strokeWidth="3">
                <path d="M1.500 25.500c4 .6 5-1.500 6-5L10.500 7c.8-3.200 3-5 7-4.200M4 10.500h12.500M12 22c5 0 6-11 14-11.500M13.500 11c5 0 5 11 11.500 11" />
              </svg>
            </NodeIcon>
            <NodeName>公式</NodeName>
            <Kebab />
          </Node>
          <Wire />
          <AddButton aria-label="添加步骤">
            <svg width="18" height="18" viewBox="0 0 18 18" stroke="#fff" strokeWidth="2"><path d="M9 0v18M0 9h18" /></svg>
          </AddButton>
          <Wire />
          <OutputNode>
            <ChartNodeIcon>
              <svg width="26" height="26" viewBox="0 0 26 26" fill={c.teal}>
                <path d="M0 22h26v3.500H0zM0 13h4v2H0zM0 17h5v3H0zM7 16l5-6v10H7zM7 4h5v4l-5 6zM14 9l2-3 3 4v10h-5zM14 1h5v5l-3-3zM21 11l5 2v7h-5zM21 6h5v4l-5-2z" />
              </svg>
            </ChartNodeIcon>
            <NodeName>图表-销售<Dots>…</Dots></NodeName>
            <Kebab />
          </OutputNode>
        </FlowPanel>
      </Body>
    </Page>
  </>
);

export default App;
